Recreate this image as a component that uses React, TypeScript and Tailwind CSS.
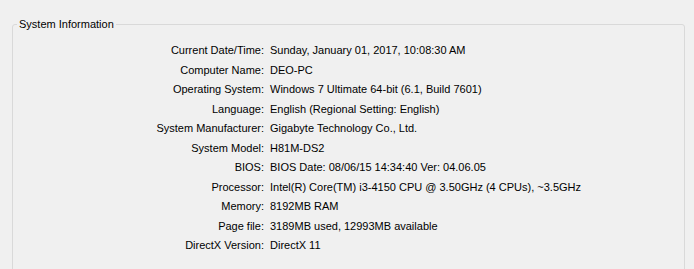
const rows: [string, string][] = [
  ["Current Date/Time:", "Sunday, January 01, 2017, 10:08:30 AM"],
  ["Computer Name:", "DEO-PC"],
  ["Operating System:", "Windows 7 Ultimate 64-bit (6.1, Build 7601)"],
  ["Language:", "English (Regional Setting: English)"],
  ["System Manufacturer:", "Gigabyte Technology Co., Ltd."],
  ["System Model:", "H81M-DS2"],
  ["BIOS:", "BIOS Date: 08/06/15 14:34:40 Ver: 04.06.05"],
  ["Processor:", "Intel(R) Core(TM) i3-4150 CPU @ 3.50GHz (4 CPUs), ~3.5GHz"],
  ["Memory:", "8192MB RAM"],
  ["Page file:", "3189MB used, 12993MB available"],
  ["DirectX Version:", "DirectX 11"],
];

export default function App() {
  return (
    <div
      className="w-[694px] h-[269px] overflow-hidden bg-[#f0f0f0] pt-[18px] pl-[12px] pr-[9px] text-[11px] text-black"
      style={{ fontFamily: '"Liberation Sans", Arial, sans-serif' }}
    >
      <fieldset className="border border-[#d9d9d9] rounded-[3px] pt-[10px] pb-4 h-[300px]">
        <legend className="ml-[4px] px-[2px] leading-[13px]">System Information</legend>
        <div className="grid grid-cols-[251px_1fr] gap-x-[6px]">
          {rows.map(([label, value]) => (
            <div key={label} className="contents">
              <div className="text-right h-[19.5px] leading-[19.5px] whitespace-nowrap">{label}</div>
              <div className="h-[19.5px] leading-[19.5px] whitespace-nowrap">{value}</div>
            </div>
          ))}
        </div>
      </fieldset>
    </div>
  );
}
